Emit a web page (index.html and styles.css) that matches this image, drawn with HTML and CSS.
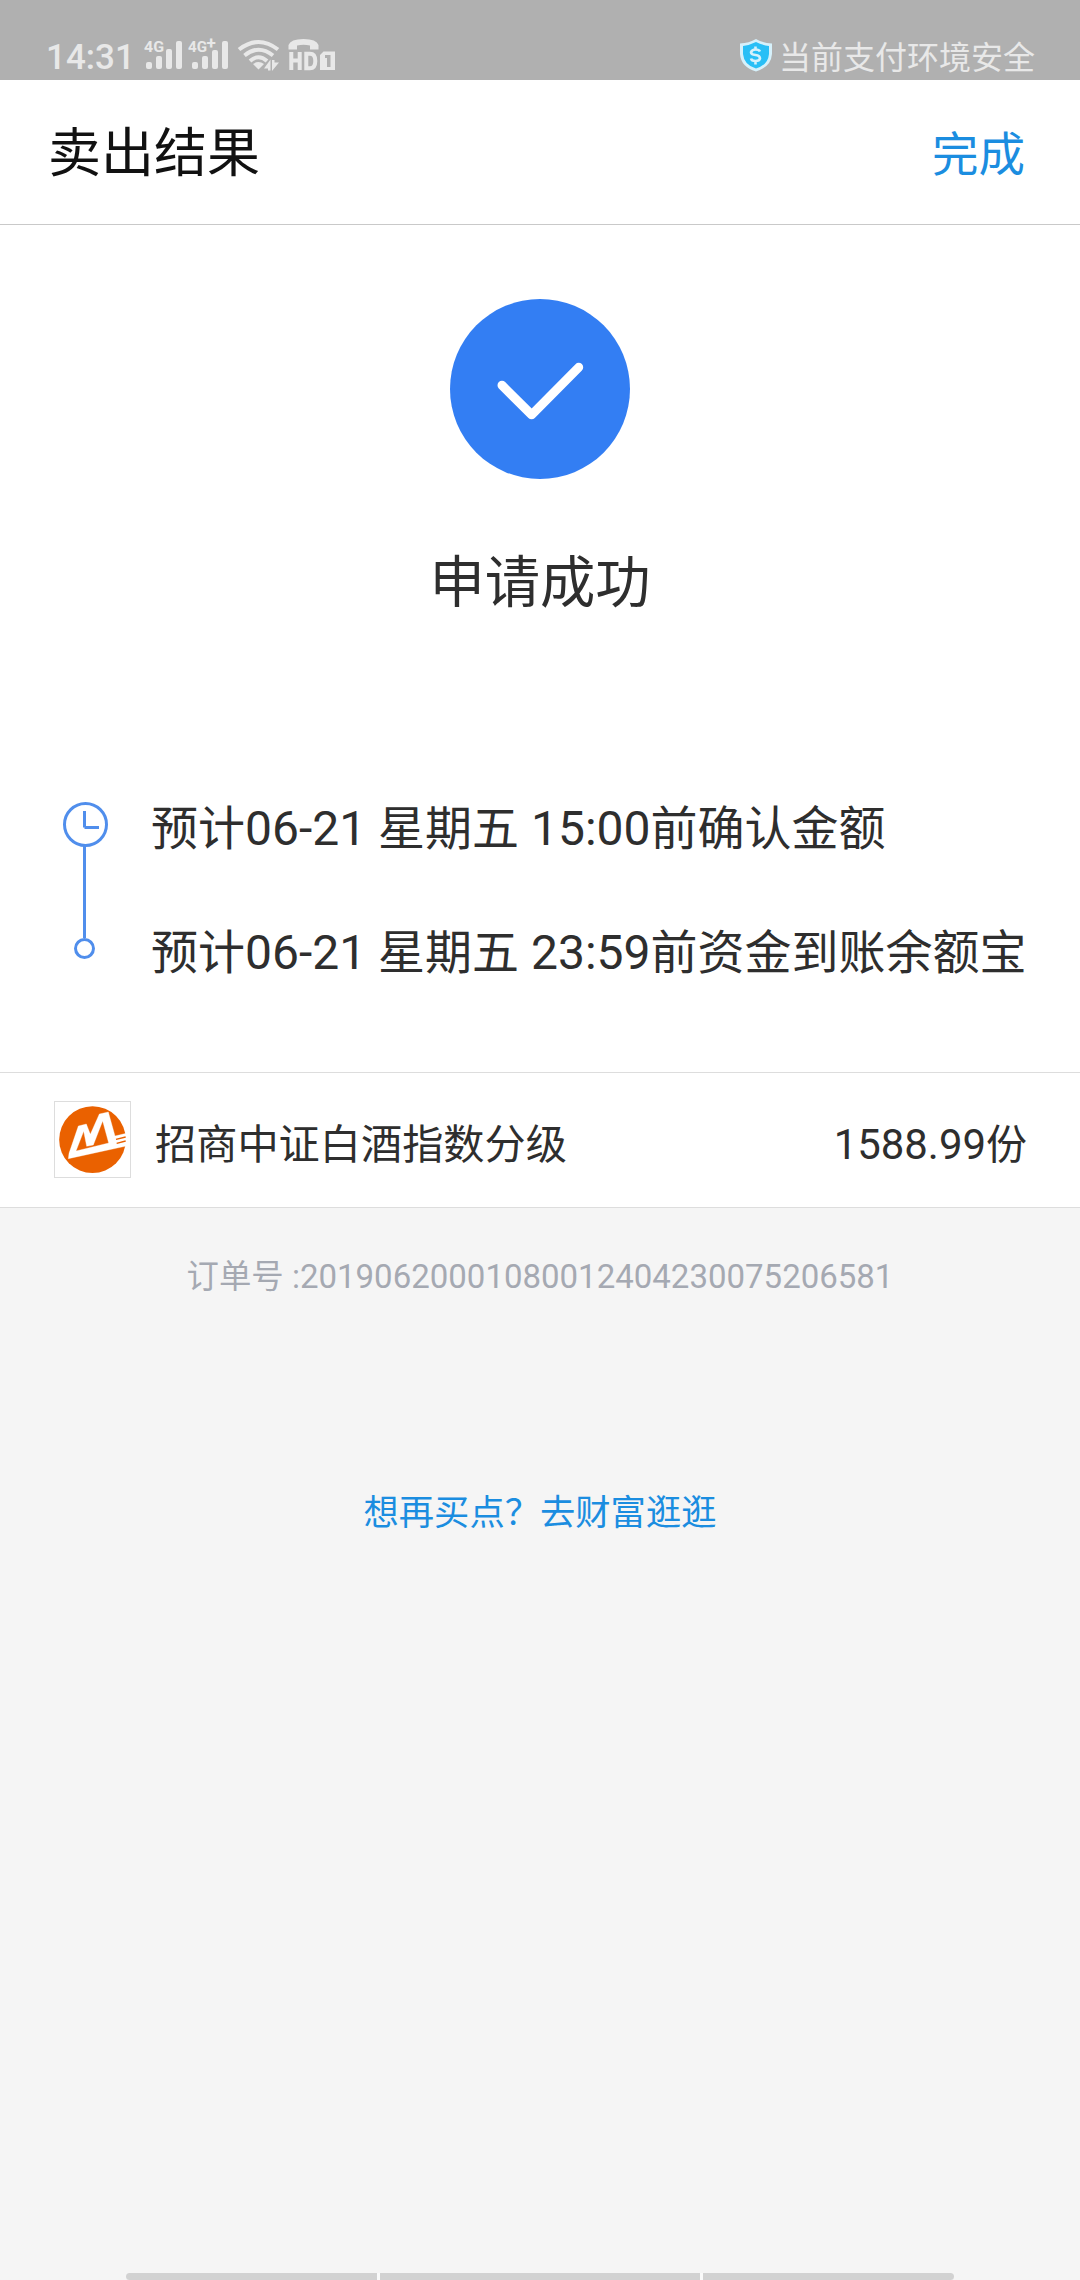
FILE: index.html
```html
<!DOCTYPE html>
<html lang="zh-CN">
<head>
<meta charset="utf-8">
<title>卖出结果</title>
<link rel="stylesheet" href="styles.css">
</head>
<body>
<div class="status">
  <span class="time">14:31</span>
  <svg class="signals" width="228" height="50" viewBox="0 -10 228 50" fill="#e8e8e8">
    <g class="net">
      <text x="1" y="17" textLength="20" lengthAdjust="spacingAndGlyphs">4G</text>
      <text x="45" y="17" textLength="19" lengthAdjust="spacingAndGlyphs">4G</text>
      <text class="plus" x="63.500" y="14">+</text>
    </g>
    <rect x="3" y="27" width="6" height="7" rx="2"/><rect x="13" y="21" width="6" height="13" rx="2"/><rect x="23" y="14" width="6" height="20" rx="2"/><rect x="33" y="6" width="6" height="28" rx="2"/>
    <rect x="49" y="27" width="6" height="7" rx="2"/><rect x="59" y="21" width="6" height="13" rx="2"/><rect x="69" y="15" width="6" height="19" rx="2"/><rect x="79" y="6" width="6" height="28" rx="2"/>
    <g fill="none" stroke="#e8e8e8" stroke-width="4">
      <path d="M96 14.500Q115.500 -0.500 135 14.500"/>
      <path d="M101.500 20.500Q115.500 9 130 20.500"/>
      <path d="M107 26Q115.500 18.500 124 26"/>
    </g>
    <path d="M110 29q5.500-4 11 0l-5.500 5.500zM121 33.500l6.500-9v11h-2.500v-2zM129 25v11l7-8.500h-4.500V25z"/>
    <path d="M145.500 14.500V10q2-6 15-6t15 6v4.500h-8.500v-4q-6.500-1.500-13 0v4z"/>
    <path fill="none" stroke="#e8e8e8" stroke-width="4" d="M148.300 17v18M156.700 17v18M148 25.500h9M163.300 18.800v14.400h3.700q5.300 0 5.300-7.200t-5.300-7.200z"/>
    <path fill-rule="evenodd" d="M180.500 16.500H192V35h-15V20zM182 20v3h2v9h3.500V20z"/>
  </svg>
  <svg class="shield" width="32" height="33" viewBox="0 0 32 33">
    <path fill="#d6f1fb" d="M16 0Q23 4 32 4.500V15Q31 28 16 32.500Q1 28 0 15V4.500Q9 4 16 0z"/>
    <path fill="#29bff6" d="M16 3Q22 6 29 7V15Q28 26 16 29.500Q4 26 3 15V7Q10 6 16 3z"/>
    <path fill="none" stroke="#d6f1fb" stroke-width="2.600" d="M20 12.500q-1-2-4.500-2t-4.500 2.700q0 2.300 4.500 2.800t4.500 3.500q-.500 2.500-4.500 2.500t-4.500-2.500M15.500 7.500v3.500M15.500 22v3.500"/>
  </svg>
  <span class="safe">当前支付环境安全</span>
</div>
<header class="bar">
  <h1>卖出结果</h1>
  <a class="done">完成</a>
</header>
<main>
  <section class="result">
    <svg width="180" height="180" viewBox="0 0 180 180">
      <circle cx="90" cy="90" r="90" fill="#337ef3"/>
      <path d="M52 86.300L81.600 115.800L128.700 68.300" fill="none" stroke="#fff" stroke-width="9" stroke-linecap="round" stroke-linejoin="round"/>
    </svg>
    <h2>申请成功</h2>
  </section>
  <section class="progress">
    <svg width="46" height="158" viewBox="0 0 46 158" fill="none" stroke="#508eec" stroke-width="3">
      <circle cx="23.500" cy="22.500" r="21"/>
      <path d="M22.500 9v16.500M22.500 25.500H37M22.500 44v92"/>
      <circle cx="22.500" cy="146.500" r="9"/>
    </svg>
    <ol>
      <li>预计<span class="num">06-21 </span>星期五<span class="num"> 15:00</span>前确认金额</li>
      <li>预计<span class="num">06-21 </span>星期五<span class="num"> 23:59</span>前资金到账余额宝</li>
    </ol>
  </section>
  <section class="fund">
    <svg class="logo" width="75" height="75" viewBox="46 36 225 225">
      <circle cx="158.500" cy="149" r="100" fill="#ea6100"/>
      <path fill="#fff" stroke="#fff" stroke-linejoin="round" fill-rule="evenodd" d="M86 206L88 190L116 108L140 102L152 133L179 72L206 66L226 138L260 130V168zM109 183L207 159L189 93L161 165L141 169L132 124z"/>
      <path fill="none" stroke="#ea6100" stroke-width="4" d="M229 148L258 141M231 160L258 153"/>
    </svg>
    <span class="name">招商中证白酒指数分级</span>
    <span class="share"><span class="num">1588.99</span>份</span>
  </section>
</main>
<p class="order">订单号<span class="num"> :20190620001080012404230075206581</span></p>
<a class="more">想再买点？去财富逛逛</a>
<div class="nav"><i></i><i></i><i></i></div>
</body>
</html>
```
FILE: styles.css
```css
* { box-sizing: border-box; margin: 0; padding: 0; }
body {
  display: flex;
  flex-direction: column;
  width: 1080px;
  height: 2280px;
  overflow: hidden;
  background: #f5f5f5;
  color: #2e2e2e;
  font-family: Roboto, "Noto Sans CJK SC", sans-serif;
}
svg { display: block; flex: none; }
.status {
  display: flex;
  flex: none;
  height: 80px;
  padding: 25px 45px 0 46px;
  background: #b0b0b0;
  color: #e8e8e8;
}
.time { width: 97px; padding-top: 12px; font-size: 35px; font-weight: 500; line-height: 42px; white-space: nowrap; }
.net { font: bold 14px Roboto, sans-serif; }
.plus { font-size: 17px; }
.shield { margin: 14px 7px 0 auto; }
.safe { padding-top: 12px; font-size: 32px; line-height: 42px; white-space: nowrap; }
.bar {
  display: flex;
  flex: none;
  justify-content: space-between;
  align-items: center;
  height: 145px;
  padding: 0 55px 4px 48px;
  border-bottom: 1px solid #c9c9c9;
  background: #fff;
}
.bar h1 { margin-bottom: 3px; font-size: 53px; font-weight: 400; color: #111; }
.done { font-size: 46.500px; color: #1b8de0; }
main { flex: none; background: #fff; }
.result {
  display: flex;
  flex-direction: column;
  align-items: center;
  height: 577px;
  padding-top: 74px;
}
.result h2 { margin-top: 65px; font-size: 55.300px; font-weight: 400; line-height: 80px; }
.progress { display: flex; height: 270px; padding-left: 62px; gap: 43px; }
.progress ol { padding-top: 2px; list-style: none; }
.progress li {
  height: 124px;
  font-size: 47px;
  line-height: 50px;
  white-space: nowrap;
}
.progress .num { font-size: 48px; }
.fund {
  display: flex;
  align-items: center;
  height: 136px;
  padding: 0 53px 1px 54px;
  border-top: 1px solid #ddd;
  border-bottom: 1px solid #ddd;
}
.logo { box-sizing: content-box; margin-bottom: 1px; border: 1px solid #ddd; }
.name { margin: 3px 0 0 24px; font-size: 41.200px; }
.share { margin: 3px 0 0 auto; font-size: 41px; }
.share .num { font-size: 41.900px; }
.order { margin-top: 44px; color: #a5a9b2; font-size: 32.400px; line-height: 50px; text-align: center; }
.order .num { font-size: 33px; }
.more { margin-top: 186px; color: #1b8de0; font-size: 35.300px; line-height: 50px; text-align: center; }
.nav {
  display: grid;
  grid-template-columns: 251px 320px 251px;
  gap: 3px;
  width: 828px;
  height: 7px;
  margin: auto auto 0;
  overflow: hidden;
  border-radius: 4px;
  background: #fafafa;
}
.nav i { background: #d2d2d2; }
```
